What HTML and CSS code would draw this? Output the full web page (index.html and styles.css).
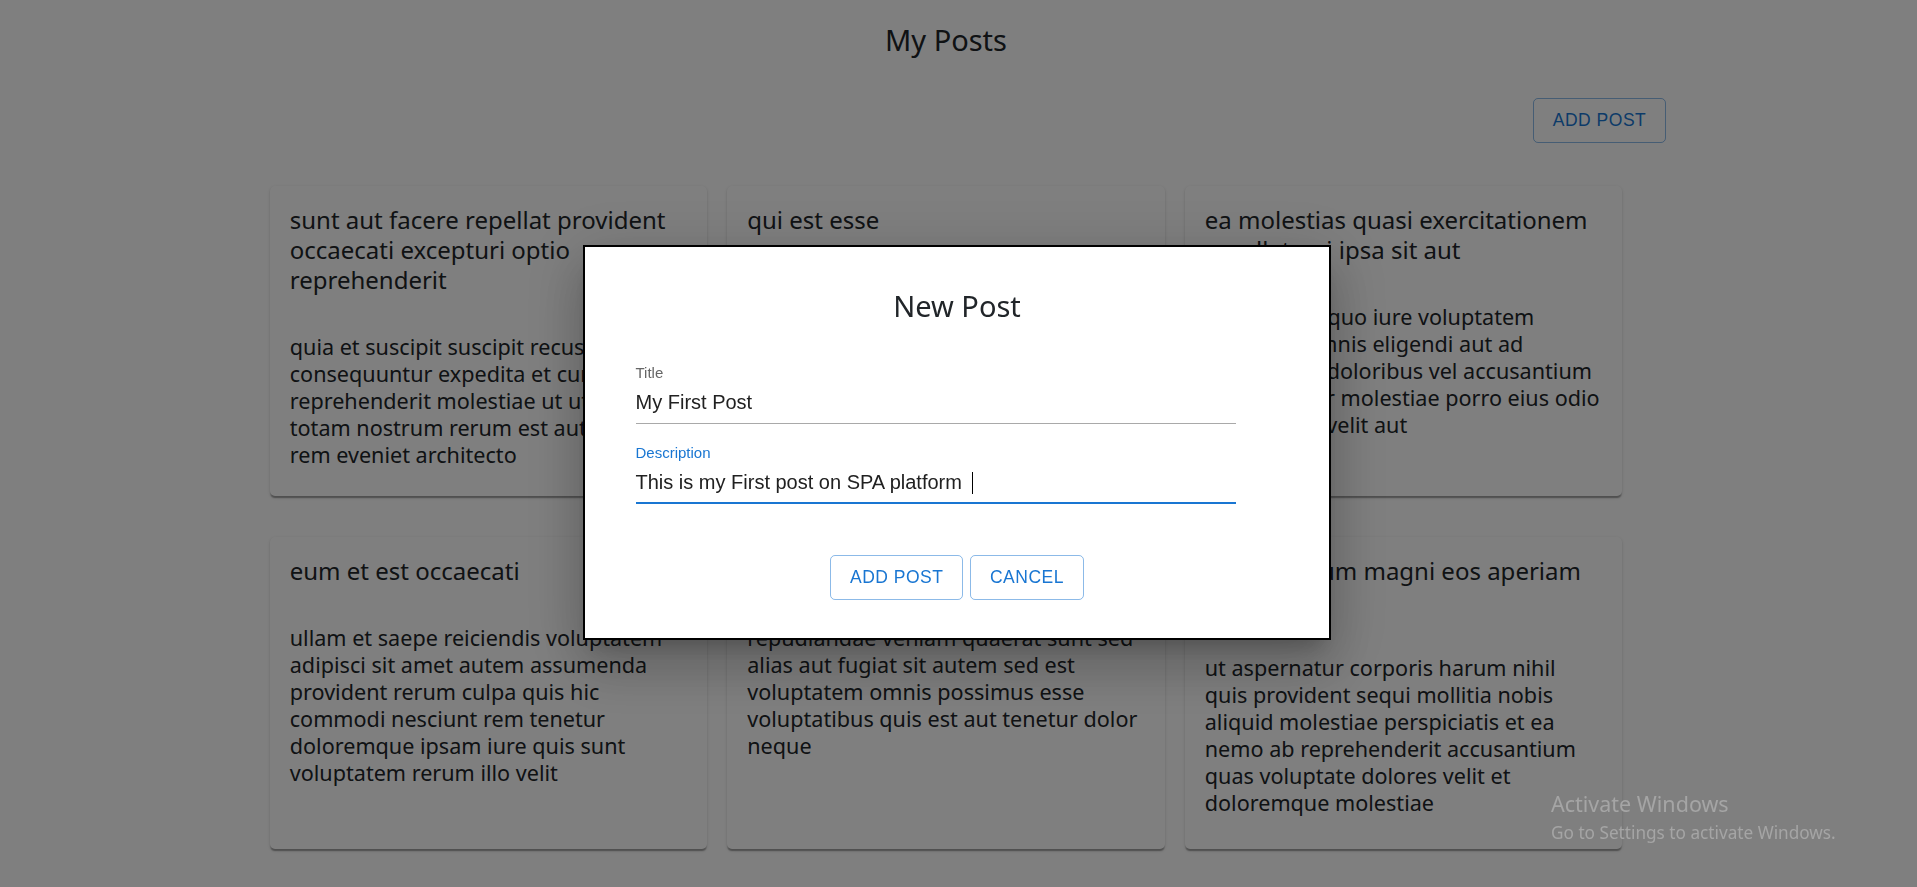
FILE: index.html
```html
<!DOCTYPE html>
<html lang="en">
<head>
<meta charset="utf-8">
<title>My Posts</title>
<link rel="stylesheet" href="styles.css">
</head>
<body>
<div class="page">
  <h2 class="page-title">My Posts</h2>
  <div class="container">
    <div class="toolbar">
      <button class="btn-outline" type="button">Add Post</button>
    </div>
    <div class="grid">
      <div class="card">
        <h5 class="card-title">sunt aut facere repellat provident<br>occaecati excepturi optio<br>reprehenderit</h5>
        <p class="card-text">quia et suscipit suscipit recusandae<br>consequuntur expedita et cum<br>reprehenderit molestiae ut ut quas<br>totam nostrum rerum est autem sunt<br>rem eveniet architecto</p>
      </div>
      <div class="card">
        <h5 class="card-title">qui est esse</h5>
        <p class="card-text">est rerum tempore vitae sequi sint nihil<br>reprehenderit dolor beatae ea dolores<br>neque fugiat blanditiis voluptate porro vel<br>nihil molestiae ut reiciendis qui aperiam<br>non debitis possimus qui neque nisi nulla</p>
      </div>
      <div class="card">
        <h5 class="card-title">ea molestias quasi exercitationem<br>repellat qui ipsa sit aut</h5>
        <p class="card-text">et iusto sed quo iure voluptatem<br>occaecati omnis eligendi aut ad<br>voluptatem doloribus vel accusantium<br>quis pariatur molestiae porro eius odio<br>et labore et velit aut</p>
      </div>
      <div class="card">
        <h5 class="card-title">eum et est occaecati</h5>
        <p class="card-text">ullam et saepe reiciendis voluptatem<br>adipisci sit amet autem assumenda<br>provident rerum culpa quis hic<br>commodi nesciunt rem tenetur<br>doloremque ipsam iure quis sunt<br>voluptatem rerum illo velit</p>
      </div>
      <div class="card">
        <h5 class="card-title">nesciunt quas odio</h5>
        <p class="card-text">repudiandae veniam quaerat sunt sed<br>alias aut fugiat sit autem sed est<br>voluptatem omnis possimus esse<br>voluptatibus quis est aut tenetur dolor<br>neque</p>
      </div>
      <div class="card">
        <h5 class="card-title">dolorem eum magni eos aperiam<br>quia</h5>
        <p class="card-text">ut aspernatur corporis harum nihil<br>quis provident sequi mollitia nobis<br>aliquid molestiae perspiciatis et ea<br>nemo ab reprehenderit accusantium<br>quas voluptate dolores velit et<br>doloremque molestiae</p>
      </div>
    </div>
  </div>
</div>

<div class="backdrop"></div>

<div class="modal" role="dialog">
  <h2 class="modal-title">New Post</h2>
  <form class="form">
    <div class="field">
      <label class="field-label">Title</label>
      <div class="field-input">My First Post</div>
    </div>
    <div class="field field-focused">
      <label class="field-label">Description</label>
      <div class="field-input">This is my First post on SPA platform&nbsp;<span class="caret"></span></div>
    </div>
  </form>
  <div class="actions">
    <button class="btn-outline" type="button">Add Post</button>
    <button class="btn-outline" type="button">Cancel</button>
  </div>
</div>

<div class="watermark">
  <div class="wm-title">Activate Windows</div>
  <div class="wm-sub">Go to Settings to activate Windows.</div>
</div>
</body>
</html>
```
FILE: styles.css
```css
html, body {
  margin: 0;
  height: 100%;
}

body {
  background: #ffffff;
  font-family: "Noto Sans", "Open Sans", sans-serif;
  color: #212529;
  overflow: hidden;
}

.page {
  padding-right: 25px;
}

.page-title {
  margin: 20px 0 0;
  font-size: 29px;
  line-height: 40px;
  font-weight: 400;
  text-align: center;
}

.container {
  max-width: 1440px;
  margin: 0 auto;
}

.toolbar {
  display: flex;
  justify-content: flex-end;
  margin-top: 38px;
}

.btn-outline {
  font-family: "Liberation Sans", Arial, sans-serif;
  font-size: 17.5px;
  letter-spacing: 0.5px;
  text-transform: uppercase;
  line-height: 30.5px;
  padding: 6.25px 18.75px;
  border: 1px solid rgba(25, 118, 210, 0.5);
  color: #1976d2;
  background: transparent;
  border-radius: 5px;
  cursor: pointer;
}

.grid {
  display: grid;
  grid-template-columns: repeat(3, 437.5px);
  grid-template-rows: 310px 312.5px;
  column-gap: 20px;
  row-gap: 41px;
  justify-content: center;
  margin-top: 42.5px;
}

.card {
  background: #ffffff;
  border-radius: 5px;
  box-shadow: 0 2.5px 1.25px -1.25px rgba(0, 0, 0, 0.2),
              0 1.25px 1.25px 0 rgba(0, 0, 0, 0.14),
              0 1.25px 3.75px 0 rgba(0, 0, 0, 0.12);
  padding: 19px 20px 28px;
  overflow: hidden;
}

.card-title {
  margin: 0 0 38px;
  font-size: 24px;
  line-height: 30px;
  font-weight: 400;
  white-space: nowrap;
}

.card-text {
  margin: 0;
  font-size: 21.6px;
  line-height: 27px;
  white-space: nowrap;
}

.backdrop {
  position: fixed;
  inset: 0;
  background: rgba(0, 0, 0, 0.5);
}

.modal {
  position: fixed;
  left: 583px;
  top: 245px;
  width: 748px;
  height: 395px;
  box-sizing: border-box;
  border: 2px solid #000;
  background: #fff;
  padding: 39px 50.5px 0;
  box-shadow: 0 14px 19px -9px rgba(0, 0, 0, 0.2),
              0 30px 48px 4px rgba(0, 0, 0, 0.14),
              0 11px 57px 10px rgba(0, 0, 0, 0.12);
}

.modal-title {
  margin: 0;
  font-size: 29px;
  line-height: 40px;
  font-weight: 400;
  text-align: center;
  color: #212529;
}

.form {
  width: 600px;
  margin-top: 39.3px;
}

.field + .field {
  margin-top: 21.6px;
}

.field-label {
  display: block;
  font-family: "Liberation Sans", Arial, sans-serif;
  font-size: 15px;
  line-height: 15px;
  color: #666666;
}

.field-input {
  margin-top: 8px;
  font-family: "Liberation Sans", Arial, sans-serif;
  font-size: 20px;
  line-height: 28px;
  color: #212121;
  padding-bottom: 6.4px;
  border-bottom: 1px solid #a9a9a9;
  white-space: nowrap;
}

.field-focused .field-label {
  color: #1976d2;
}

.field-focused .field-input {
  padding-bottom: 5.4px;
  border-bottom: 2px solid #1976d2;
}

.caret {
  display: inline-block;
  width: 0;
  height: 22px;
  border-left: 1px solid #000;
  vertical-align: -5px;
  margin-left: 5px;
}

.actions {
  display: flex;
  justify-content: center;
  gap: 7px;
  margin-top: 51px;
}

.watermark {
  position: fixed;
  left: 1551px;
  top: 792.6px;
  color: #a5a5a5;
  font-family: "Noto Sans", "Open Sans", sans-serif;
}

.wm-title {
  font-size: 21.5px;
  line-height: 21.5px;
}

.wm-sub {
  margin-top: 9.6px;
  font-size: 17.2px;
  line-height: 17.2px;
}
```
